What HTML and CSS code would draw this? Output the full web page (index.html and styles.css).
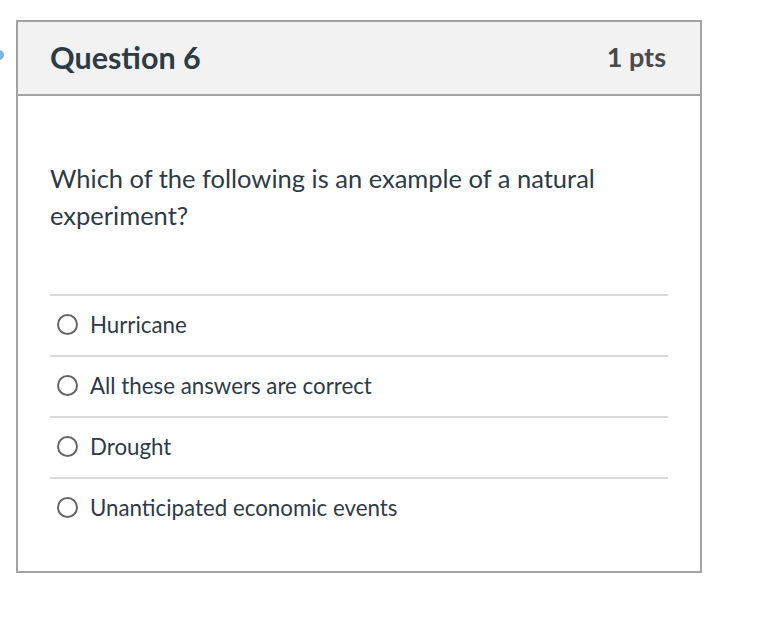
FILE: index.html
```html
<!DOCTYPE html>
<html>
<head>
<meta charset="utf-8">
<link rel="stylesheet" href="styles.css">
</head>
<body>
<div class="page">
  <span class="edge-mark"></span>
  <div class="card">
    <div class="card-header">
      <h2 class="title">Question 6</h2>
      <span class="pts">1 pts</span>
    </div>
    <div class="card-body">
      <p class="question">Which of the following is an example of a natural experiment?</p>
      <ul class="answers">
        <li class="answer"><span class="radio"></span><span class="label">Hurricane</span></li>
        <li class="answer"><span class="radio"></span><span class="label">All these answers are correct</span></li>
        <li class="answer"><span class="radio"></span><span class="label">Drought</span></li>
        <li class="answer"><span class="radio"></span><span class="label">Unanticipated economic events</span></li>
      </ul>
    </div>
  </div>
</div>
</body>
</html>
```

FILE: styles.css
```css
html, body {
  margin: 0;
  padding: 0;
  background: #ffffff;
  font-family: Lato, "Liberation Sans", sans-serif;
  color: #2d3b45;
}

.page {
  position: relative;
  padding: 20px 0 0 16px;
}

.edge-mark {
  position: absolute;
  left: -6px;
  top: 50px;
  width: 10px;
  height: 10px;
  border-radius: 50%;
  background: #7fb3dc;
}

.card {
  width: 682px;
  border: 2px solid #a3a3a3;
  background: #ffffff;
}

.card-header {
  box-sizing: border-box;
  background: #f2f2f2;
  border-bottom: 2px solid #a3a3a3;
  height: 74px;
  display: flex;
  align-items: center;
  justify-content: space-between;
  padding: 0 34px 3px 32px;
}

.title {
  margin: 0;
  font-size: 30.5px;
  font-weight: 700;
  color: #2d3b45;
}

.pts {
  font-size: 27px;
  font-weight: 700;
  color: #4a4a4a;
}

.card-body {
  padding: 64px 32px 33px 32px;
}

.question {
  margin: 0 0 60px 0;
  font-size: 25.5px;
  line-height: 37px;
  color: #2d3b45;
  max-width: 590px;
}

.answers {
  list-style: none;
  margin: 0;
  padding: 0;
}

.answer {
  height: 61px;
  box-sizing: border-box;
  border-top: 2px solid #d9d9d9;
  display: flex;
  align-items: center;
  padding: 0 0 2px 7px;
}

.radio {
  width: 21px;
  height: 21px;
  box-sizing: border-box;
  border: 2px solid #666666;
  border-radius: 50%;
  margin-right: 12px;
  flex: none;
}

.label {
  font-size: 22.3px;
  color: #2d3b45;
}
```
